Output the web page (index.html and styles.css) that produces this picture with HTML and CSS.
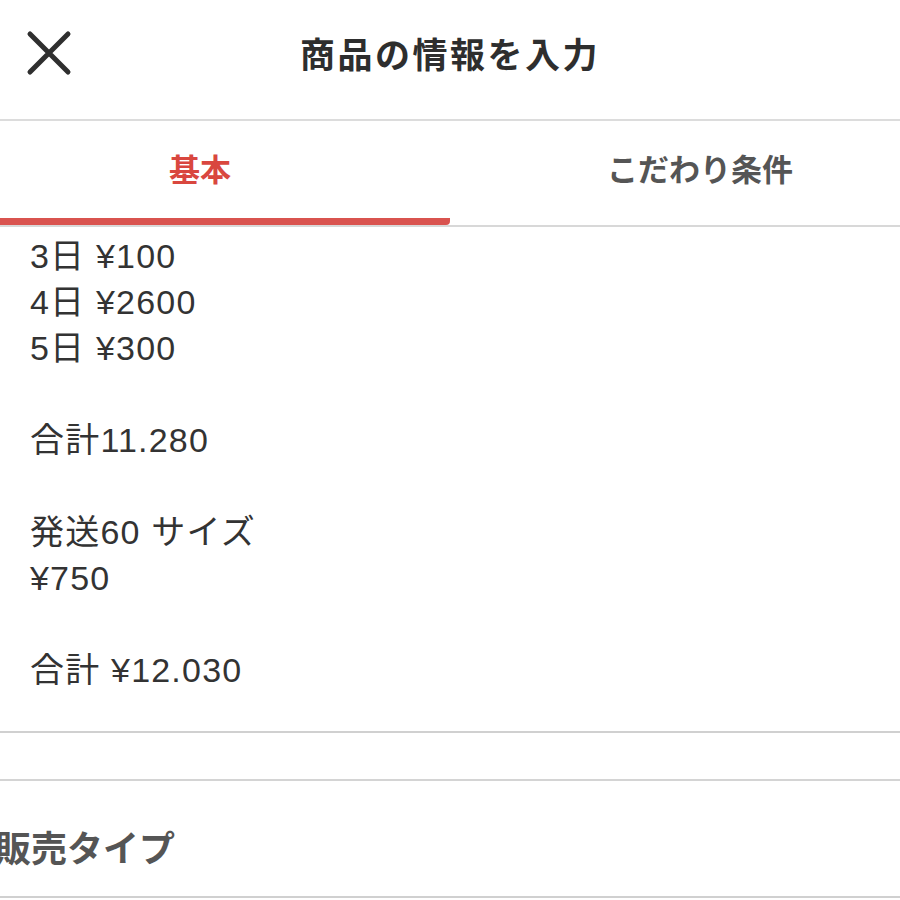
FILE: index.html
```html
<!DOCTYPE html>
<html lang="ja">
<head>
<meta charset="utf-8">
<link rel="stylesheet" href="styles.css">
</head>
<body>
<header class="topbar">
  <div class="close">
    <svg width="46" height="46" viewBox="0 0 46 46"><path d="M4 4 L42 42 M42 4 L4 42" stroke="#2f2f2f" stroke-width="5" stroke-linecap="round" fill="none"/></svg>
  </div>
  <h1 class="title">商品の情報を入力</h1>
  <div></div>
</header>
<nav class="tabs">
  <div class="tab active">基本</div>
  <div class="tab second">こだわり条件</div>
</nav>
<section class="desc">
  <p>3日 ¥100</p>
  <p>4日 ¥2600</p>
  <p>5日 ¥300</p>
  <p class="blank">&nbsp;</p>
  <p>合計11.280</p>
  <p class="blank">&nbsp;</p>
  <p>発送60 サイズ</p>
  <p>¥750</p>
  <p class="blank">&nbsp;</p>
  <p>合計 ¥12.030</p>
</section>
<div class="spacer"></div>
<section class="row">
  <h2 class="row-title">販売タイプ</h2>
</section>
</body>
</html>
```
FILE: styles.css
```css
* { box-sizing: border-box; }
body {
  margin: 0;
  width: 900px;
  background: #fff;
  font-family: "Noto Sans CJK JP", "Noto Sans", sans-serif;
  color: #333;
  overflow: hidden;
}
.topbar {
  height: 121px;
  display: grid;
  grid-template-columns: 1fr auto 1fr;
  align-items: center;
  border-bottom: 2px solid #dcdcdc;
  padding-bottom: 14px;
}
.close {
  padding-left: 26px;
  display: flex;
  align-items: center;
}
.title {
  margin: 0;
  font-size: 35px;
  font-weight: 700;
  letter-spacing: 2.5px;
  color: #2e2e2e;
}
.tabs {
  display: flex;
  height: 106px;
  border-bottom: 2px solid #d8d8d8;
}
.tab {
  flex: 1;
  display: flex;
  align-items: center;
  justify-content: center;
  font-size: 31px;
  font-weight: 700;
  color: #555;
  padding-bottom: 4px;
  border-bottom: 7px solid transparent;
}
.tab.active {
  color: #d9473f;
  border-bottom-color: #d9534f;
  border-bottom-right-radius: 4px;
  padding-right: 50px;
}
.tab.second {
  padding-left: 50px;
}
.desc {
  padding: 6px 0 38px 30px;
  border-bottom: 2px solid #d0d0d0;
}
.desc p {
  margin: 0;
  font-family: "Liberation Sans", "Noto Sans CJK JP", sans-serif;
  font-size: 34px;
  line-height: 46px;
  letter-spacing: 1.2px;
  color: #333;
}
.spacer {
  height: 48px;
  border-bottom: 2px solid #d4d4d4;
}
.row {
  height: 117px;
  display: flex;
  align-items: center;
  border-bottom: 2px solid #d0d0d0;
  padding-top: 14px;
}
.row-title {
  margin: 0 0 0 -5px;
  font-size: 36px;
  font-weight: 700;
  color: #555;
}
```
